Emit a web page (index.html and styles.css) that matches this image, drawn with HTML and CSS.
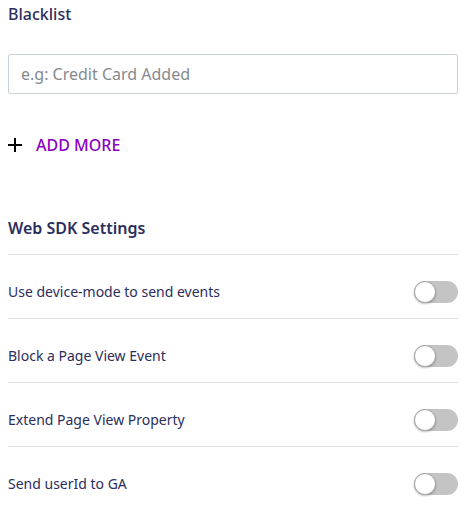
FILE: index.html
```html
<!DOCTYPE html>
<html>
<head>
<meta charset="utf-8">
<link rel="stylesheet" href="styles.css">
</head>
<body>
<div class="panel">
  <div class="label">Blacklist</div>
  <div class="input"><span class="placeholder">e.g: Credit Card Added</span></div>
  <div class="add-more">
    <svg class="plus" width="14" height="14" viewBox="0 0 14 14"><path d="M7 0v14M0 7h14" stroke="#000" stroke-width="2"/></svg>
    <span>ADD MORE</span>
  </div>
  <div class="section-title">Web SDK Settings</div>
  <div class="row"><span class="row-text">Use device-mode to send events</span><span class="toggle"><span class="knob"></span></span></div>
  <div class="row"><span class="row-text">Block a Page View Event</span><span class="toggle"><span class="knob"></span></span></div>
  <div class="row"><span class="row-text">Extend Page View Property</span><span class="toggle"><span class="knob"></span></span></div>
  <div class="row"><span class="row-text">Send userId to GA</span><span class="toggle"><span class="knob"></span></span></div>
</div>
</body>
</html>
```
FILE: styles.css
```css
html, body { margin: 0; padding: 0; background: #fff; }
body { font-family: "Noto Sans", "Open Sans", sans-serif; color: #2b2e5c; }
.panel { width: 450px; margin-left: 8px; padding-top: 3px; }
.label { font-size: 16px; font-weight: 500; line-height: 22px; }
.input {
  margin-top: 29px; height: 40px; box-sizing: border-box;
  border: 1px solid #c9d1d8; border-radius: 2px;
  display: flex; align-items: center; padding-left: 12px;
}
.placeholder { font-size: 16px; color: #858a8f; }
.add-more { margin-top: 41px; display: flex; align-items: center; height: 20px; }
.plus { display: block; margin-right: 14px; }
.add-more span { color: #8a00c0; font-size: 16px; font-weight: 500; line-height: 20px; }
.section-title { margin-top: 62px; font-size: 16px; font-weight: 600; line-height: 22px; padding-bottom: 15px; }
.row {
  border-top: 1px solid #dcdcdc; padding: 26px 0 15px;
  display: flex; align-items: center; justify-content: space-between;
}
.row-text { font-size: 14px; line-height: 22px; }
.toggle { width: 44px; height: 22px; border-radius: 11px; background: #c4c4c4; position: relative; display: block; }
.knob {
  position: absolute; left: 0; top: 0; width: 20px; height: 20px; border-radius: 50%;
  background: #fff; border: 1px solid #a8a8a8; box-shadow: 0 1px 2px rgba(0,0,0,0.25);
}
```
